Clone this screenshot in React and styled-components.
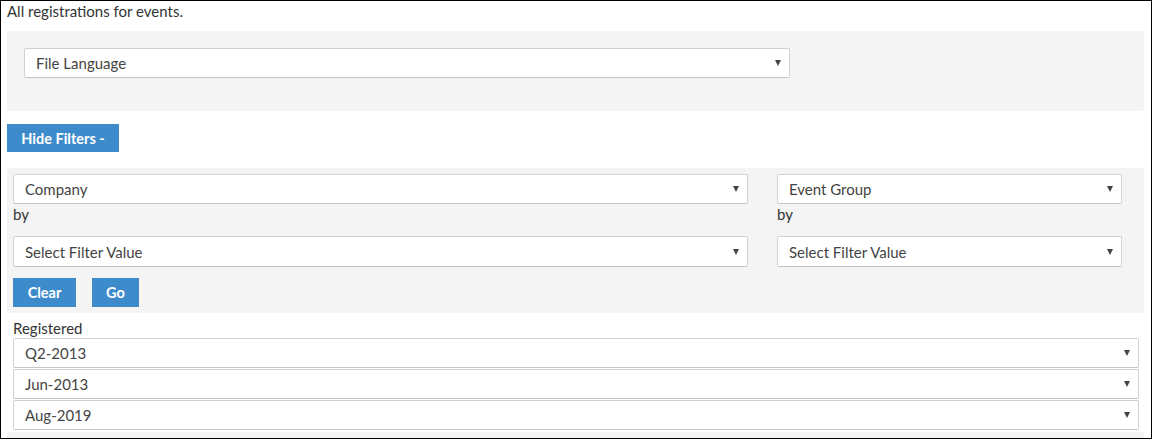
import React from "react";
import styled, { createGlobalStyle } from "styled-components";

const Global = createGlobalStyle`
  html, body { margin: 0; padding: 0; background: #fff; }
  body { font-family: "Lato", "Liberation Sans", sans-serif; font-size: 15px; color: #333; }
  * { box-sizing: border-box; }
`;

const Frame = styled.div`
  width: 1152px;
  height: 439px;
  border: 1px solid #000;
  overflow: hidden;
  padding: 0 7px 0 6px;
`;

const Title = styled.div`
  line-height: 20px;
  height: 20px;
  margin-bottom: 10px;
  font-size: 15px;
  color: #333;
`;

const Panel = styled.div`
  background: #f4f4f4;
  border-radius: 3px;
  padding: ${(p) => p.$pad || "0"};
  height: ${(p) => (p.$h ? p.$h + "px" : "auto")};
`;

const SelectBox = styled.div`
  display: flex;
  align-items: center;
  justify-content: space-between;
  width: ${(p) => (p.$w ? p.$w + "px" : "auto")};
  height: ${(p) => p.$h || 30}px;
  background: #fff;
  border: 1px solid #d2d2d2;
  border-bottom-color: #c4c4c4;
  border-radius: 2px;
  padding: 0 8px 0 11px;
  font-size: 15px;
  color: #444;
`;

const Caret = styled.span`
  width: 0;
  height: 0;
  border-left: 3.5px solid transparent;
  border-right: 3.5px solid transparent;
  border-top: 6px solid #444;
`;

const Button = styled.button`
  background: #3e8bcc;
  color: #fff;
  border: none;
  border-radius: 0;
  font-family: inherit;
  font-weight: 700;
  font-size: 14.5px;
  height: ${(p) => p.$h || 28}px;
  width: ${(p) => p.$w}px;
  padding: 0;
  cursor: pointer;
`;

const HideButton = styled(Button)`
  margin-top: 13px;
  display: block;
`;

const FilterPanel = styled(Panel)`
  margin-top: 16px;
  padding: 6px 22px 6px 6px;
`;

const FilterGrid = styled.div`
  display: grid;
  grid-template-columns: 735px 345px;
  column-gap: 29px;
`;

const FilterCol = styled.div`
  display: flex;
  flex-direction: column;
`;

const ByLabel = styled.div`
  line-height: 20px;
  height: 20px;
  margin-bottom: 12px;
  color: #333;
  font-size: 15px;
`;

const ButtonRow = styled.div`
  display: flex;
  gap: 16px;
  margin-top: 11px;
`;

const Section = styled.div`
  padding: 5px 5px 0 6px;
`;

const SectionLabel = styled.div`
  line-height: 20px;
  height: 20px;
  color: #333;
  font-size: 15px;
`;

const Stack = styled.div`
  display: flex;
  flex-direction: column;
  gap: 1px;
`;

const FooterPanel = styled(Panel)`
  margin-top: 2px;
  height: 20px;
`;

const Select = ({ children, ...rest }) => (
  <SelectBox {...rest}>
    <span>{children}</span>
    <Caret />
  </SelectBox>
);

export default function App() {
  return (
    <>
      <Global />
      <Frame>
        <Title>All registrations for events.</Title>
        <Panel $pad="17px 0 0 17px" $h={80}>
          <Select $w={766}>File Language</Select>
        </Panel>
        <HideButton $w={112}>Hide Filters -</HideButton>
        <FilterPanel>
          <FilterGrid>
            <FilterCol>
              <Select>Company</Select>
              <ByLabel>by</ByLabel>
              <Select $h={31}>Select Filter Value</Select>
            </FilterCol>
            <FilterCol>
              <Select>Event Group</Select>
              <ByLabel>by</ByLabel>
              <Select $h={31}>Select Filter Value</Select>
            </FilterCol>
          </FilterGrid>
          <ButtonRow>
            <Button $w={63} $h={29}>Clear</Button>
            <Button $w={47} $h={29}>Go</Button>
          </ButtonRow>
        </FilterPanel>
        <Section>
          <SectionLabel>Registered</SectionLabel>
          <Stack>
            <Select>Q2-2013</Select>
            <Select>Jun-2013</Select>
            <Select>Aug-2019</Select>
          </Stack>
        </Section>
        <FooterPanel />
      </Frame>
    </>
  );
}
